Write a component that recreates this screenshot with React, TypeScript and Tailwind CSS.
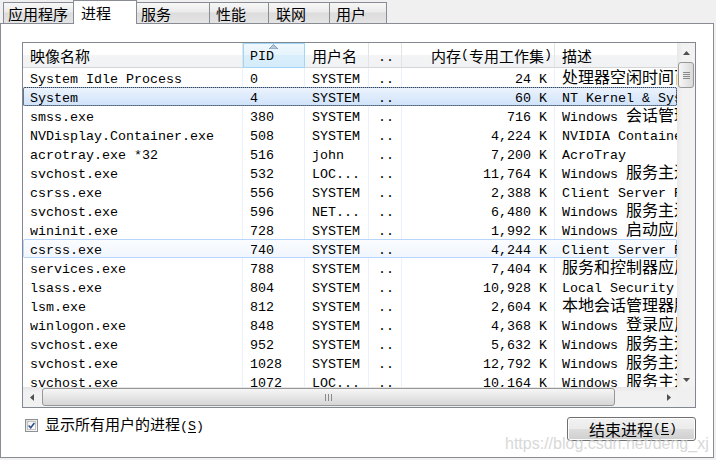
import React from 'react'

const CJK_RE = /([\u2E80-\u9FFF\uFF00-\uFFEF]+)/

// renders latin in the parent font and CJK runs with their own size
function Mixed({ text, cjk }: { text: string; cjk: string }) {
  const parts = text.split(CJK_RE)
  return (
    <>
      {parts.map((p, i) =>
        i % 2 === 1 ? (
          <span key={i} className={cjk}>
            {p}
          </span>
        ) : (
          <React.Fragment key={i}>{p}</React.Fragment>
        )
      )}
    </>
  )
}

type Proc = [string, string, string, string, string]

const procs: Proc[] = [
  ['System Idle Process', '0', 'SYSTEM', '24 K', '处理器空闲时间百分比'],
  ['System', '4', 'SYSTEM', '60 K', 'NT Kernel & System'],
  ['smss.exe', '380', 'SYSTEM', '716 K', 'Windows 会话管理器'],
  ['NVDisplay.Container.exe', '508', 'SYSTEM', '4,224 K', 'NVIDIA Container'],
  ['acrotray.exe *32', '516', 'john', '7,200 K', 'AcroTray'],
  ['svchost.exe', '532', 'LOC...', '11,764 K', 'Windows 服务主进程'],
  ['csrss.exe', '556', 'SYSTEM', '2,388 K', 'Client Server Runtime Process'],
  ['svchost.exe', '596', 'NET...', '6,480 K', 'Windows 服务主进程'],
  ['wininit.exe', '728', 'SYSTEM', '1,992 K', 'Windows 启动应用程序'],
  ['csrss.exe', '740', 'SYSTEM', '4,244 K', 'Client Server Runtime Process'],
  ['services.exe', '788', 'SYSTEM', '7,404 K', '服务和控制器应用程序'],
  ['lsass.exe', '804', 'SYSTEM', '10,928 K', 'Local Security Authority Process'],
  ['lsm.exe', '812', 'SYSTEM', '2,604 K', '本地会话管理器服务'],
  ['winlogon.exe', '848', 'SYSTEM', '4,368 K', 'Windows 登录应用程序'],
  ['svchost.exe', '952', 'SYSTEM', '5,632 K', 'Windows 服务主进程'],
  ['svchost.exe', '1028', 'SYSTEM', '12,792 K', 'Windows 服务主进程'],
  ['svchost.exe', '1072', 'LOC...', '10,164 K', 'Windows 服务主进程'],
]

const tabs = [
  { label: '应用程序', cls: 'w-[71px] pl-[4px]' },
  { label: '进程', cls: 'w-[64px] pl-[7px]', active: true },
  { label: '服务', cls: 'w-[74px] pl-[4px]' },
  { label: '性能', cls: 'w-[60px] pl-[6px]' },
  { label: '联网', cls: 'w-[62px] pl-[7px]' },
  { label: '用户', cls: 'w-[58px] pl-[6px]' },
]

function TabStrip() {
  return (
    <div className="flex items-end h-[23px] pl-[3px]">
      {tabs.map((t, i) =>
        t.active ? (
          <div
            key={t.label}
            className={`${t.cls} relative z-10 -ml-px -mb-px h-[24px] flex items-center bg-white border border-b-0 border-[#898c95] text-[15px] leading-none pb-[1px]`}
          >
            {t.label}
          </div>
        ) : (
          <div
            key={t.label}
            className={`${t.cls} ${i === 0 ? '' : '-ml-px'} h-[21px] flex items-center border border-b-0 border-[#898c95] bg-[linear-gradient(to_bottom,#f7f7f7_0%,#ebebeb_45%,#dcdcdc_50%,#e4e4e4_100%)] text-[15px] leading-none pt-[1px]`}
          >
            {t.label}
          </div>
        )
      )}
    </div>
  )
}

function HeaderCell({ w, children, right, sorted, last }: { w: string; children: React.ReactNode; right?: boolean; sorted?: boolean; last?: boolean }) {
  const base = sorted
    ? 'bg-[linear-gradient(to_bottom,#f0f8fd_0%,#e6f4fc_50%,#d9eefb_50%,#d4ecfa_100%)] shadow-[inset_0_0_0_1px_#9ed8f6]'
    : 'bg-[linear-gradient(to_bottom,#ffffff_0%,#ffffff_50%,#f3f4f6_50%,#f1f2f4_100%)] border-b border-[#d5d5d5]'
  return (
    <div
      className={`${w} ${base} ${last || sorted ? '' : 'border-r border-r-[#e3e4e6]'} relative shrink-0 h-full flex items-center overflow-hidden whitespace-nowrap ${right ? 'justify-end pr-[2px]' : 'pl-[7px]'}`}
    >
      {sorted && (
        <svg className="absolute top-[1px] left-[26px]" width="9" height="5" viewBox="0 0 9 5">
          <polygon points="0,5 4.5,0.5 9,5" fill="#b7c8d8" stroke="#6f8fae" strokeWidth="0.8" />
        </svg>
      )}
      {children}
    </div>
  )
}

const H = 'text-[15px] font-[\'Noto_Sans_CJK_SC\',sans-serif]'

function Header() {
  return (
    <div className="flex h-[25px] shrink-0 font-['Liberation_Mono','Noto_Sans_CJK_SC',monospace] text-[13.33px] leading-none">
      <HeaderCell w="w-[220px]">
        <Mixed text="映像名称" cjk={H} />
      </HeaderCell>
      <HeaderCell w="w-[62px]" sorted>
        <span className="pt-[3px]">PID</span>
      </HeaderCell>
      <HeaderCell w="w-[64px]">
        <Mixed text="用户名" cjk={H} />
      </HeaderCell>
      <HeaderCell w="w-[33px]">
        <span className="pl-[2px] pt-[5px]">..</span>
      </HeaderCell>
      <HeaderCell w="w-[153px]" right>
        <Mixed text="内存(专用工作集)" cjk={H} />
      </HeaderCell>
      <HeaderCell w="w-[122px]" last>
        <Mixed text="描述" cjk={H} />
      </HeaderCell>
    </div>
  )
}

const D = 'text-[16px] leading-[0px] font-[\'Noto_Sans_CJK_SC\',sans-serif]'

function Row({ p, state }: { p: Proc; state?: 'sel' | 'hot' }) {
  const rowCls =
    state === 'sel'
      ? 'rounded-[2px] bg-linear-to-b from-[#edf4fd] to-[#cfe2fa] shadow-[inset_0_0_0_1px_#84acdd] outline-1 outline-dotted outline-[#404040] -outline-offset-1'
      : state === 'hot'
        ? 'rounded-[2px] bg-linear-to-b from-[#fbfdff] to-[#f0f6fe] shadow-[inset_0_0_0_1px_#b8d6fb]'
        : ''
  const sep = state ? 'border-r border-transparent' : 'border-r border-[#ebf1fa]'
  const cell = 'h-[19px] shrink-0 overflow-hidden whitespace-nowrap leading-[23px]'
  return (
    <div className={`flex h-[19px] shrink-0 items-start ${rowCls}`}>
      <div className={`w-[220px] pl-[7px] ${cell} ${sep}`}>{p[0]}</div>
      <div className={`w-[62px] pl-[7px] ${cell} ${sep}`}>{p[1]}</div>
      <div className={`w-[64px] pl-[7px] ${cell} ${sep}`}>{p[2]}</div>
      <div className={`w-[33px] pl-[9px] ${cell} ${sep}`}>..</div>
      <div className={`w-[153px] pr-[7px] text-right ${cell} ${sep}`}>{p[3]}</div>
      <div className={`w-[122px] pl-[7px] ${cell}`}>
        <Mixed text={p[4]} cjk={D} />
      </div>
    </div>
  )
}

function VScroll() {
  return (
    <div className="w-[18px] flex flex-col shrink-0">
      <div className="h-[344px] flex flex-col bg-[linear-gradient(to_right,#e8e8e8_0%,#f2f2f2_30%,#f2f2f2_100%)]">
        <div className="h-[17px] flex items-center justify-center pt-[3px]">
          <svg width="7" height="4" viewBox="0 0 7 4">
            <polygon points="0,4 3.5,0 7,4" fill="#505050" />
          </svg>
        </div>
        <div className="mt-[2px] ml-[1px] w-[16px] h-[26px] rounded-[3px] border border-[#979797] bg-linear-to-r from-[#f6f6f6] to-[#dadada] flex flex-col items-center justify-center gap-[1px]">
          <div className="w-[7px] h-px bg-[#8a8a8a]" />
          <div className="w-[7px] h-px bg-[#8a8a8a]" />
          <div className="w-[7px] h-px bg-[#8a8a8a]" />
          <div className="w-[7px] h-px bg-[#8a8a8a]" />
        </div>
        <div className="flex-1" />
        <div className="h-[17px] flex items-center justify-center pt-[2px]">
          <svg width="7" height="4" viewBox="0 0 7 4">
            <polygon points="0,0 7,0 3.5,4" fill="#505050" />
          </svg>
        </div>
      </div>
      <div className="flex-1 bg-[#f0f0f0]" />
    </div>
  )
}

function HScroll() {
  return (
    <div className="h-[20px] shrink-0 flex bg-[linear-gradient(to_bottom,#e6e6e6_0%,#f1f1f1_25%,#f1f1f1_100%)]">
      <div className="w-[17px] shrink-0 flex items-center justify-center pl-[1px]">
        <svg width="4" height="7" viewBox="0 0 4 7">
          <polygon points="4,0 4,7 0,3.5" fill="#505050" />
        </svg>
      </div>
      <div className="ml-[2px] my-[1px] w-[573px] shrink-0 rounded-[3px] border border-[#979797] bg-linear-to-b from-[#f6f6f6] to-[#d6d6d6] flex items-center justify-center gap-[2px]">
        <div className="w-px h-[7px] bg-[#8a8a8a]" />
        <div className="w-px h-[7px] bg-[#8a8a8a]" />
        <div className="w-px h-[7px] bg-[#8a8a8a]" />
      </div>
      <div className="flex-1" />
      <div className="w-[17px] shrink-0 flex items-center justify-center">
        <svg width="4" height="7" viewBox="0 0 4 7">
          <polygon points="0,0 4,3.5 0,7" fill="#505050" />
        </svg>
      </div>
    </div>
  )
}

function ListView() {
  return (
    <div className="w-[674px] h-[366px] border border-[#828790] flex bg-white">
      <div className="w-[654px] shrink-0 flex flex-col">
        <Header />
        <div className="h-[319px] overflow-hidden flex flex-col font-['Liberation_Mono','Noto_Sans_CJK_SC',monospace] text-[13.33px] text-black">
          {procs.map((p, i) => (
            <Row key={i} p={p} state={i === 1 ? 'sel' : i === 9 ? 'hot' : undefined} />
          ))}
        </div>
        <HScroll />
      </div>
      <VScroll />
    </div>
  )
}

function BottomBar() {
  return (
    <div className="w-[674px] flex justify-between items-start pt-[9px]">
      <div className="ml-[3px] mt-[1px] h-[14px] flex items-center gap-[7px]">
        <div className="w-[13px] h-[13px] border border-[#8e8f8f] bg-linear-to-br from-[#dcdcdc] to-[#ffffff] p-px">
          <div className="w-full h-full border border-[#c0c0c0] bg-linear-to-br from-[#f0f0f0] to-white flex items-center justify-center">
            <svg width="9" height="9" viewBox="0 0 9 9">
              <path d="M0.8 4.4 L3.5 7.3 L8.2 1.2" stroke="#2d4e88" strokeWidth="2" fill="none" />
            </svg>
          </div>
        </div>
        <div className="text-[15px] leading-none whitespace-nowrap font-['Liberation_Mono','Noto_Sans_CJK_SC',monospace]">
          <span className="font-['Noto_Sans_CJK_SC',sans-serif]">显示所有用户的进程</span>
          <span className="text-[13.33px]">
            (<span className="underline underline-offset-2">S</span>)
          </span>
        </div>
      </div>
      <div className="w-[129px] h-[24px] rounded-[3px] border border-[#707070] bg-[linear-gradient(to_bottom,#f2f2f2_0%,#ebebeb_50%,#dddddd_50%,#cfcfcf_100%)] shadow-[inset_0_0_0_1px_#fcfcfc] flex items-center justify-center pl-[3px] whitespace-nowrap leading-none font-['Liberation_Mono','Noto_Sans_CJK_SC',monospace]">
        <span className="text-[16px] font-['Noto_Sans_CJK_SC',sans-serif]">结束进程</span>
        <span className="text-[13.33px]">
          (<span className="underline underline-offset-2">E</span>)
        </span>
      </div>
    </div>
  )
}

export default function App() {
  return (
    <div className="relative w-[716px] h-[460px] overflow-hidden bg-[#f0f0f0] text-black font-['Noto_Sans_CJK_SC',sans-serif]">
      <TabStrip />
      <div className="w-[714px] h-[435px] border border-[#898c95] bg-white pl-[21px] pt-[18px]">
        <ListView />
        <BottomBar />
      </div>
      {/* watermark baked into the screenshot */}
      <div className="absolute left-[505px] top-[435px] text-[16px] leading-[18px] text-[#cfcfcf] opacity-80 font-['Liberation_Sans',sans-serif] pointer-events-none">
        https://blog.csdn.net/deng_xj
      </div>
    </div>
  )
}
